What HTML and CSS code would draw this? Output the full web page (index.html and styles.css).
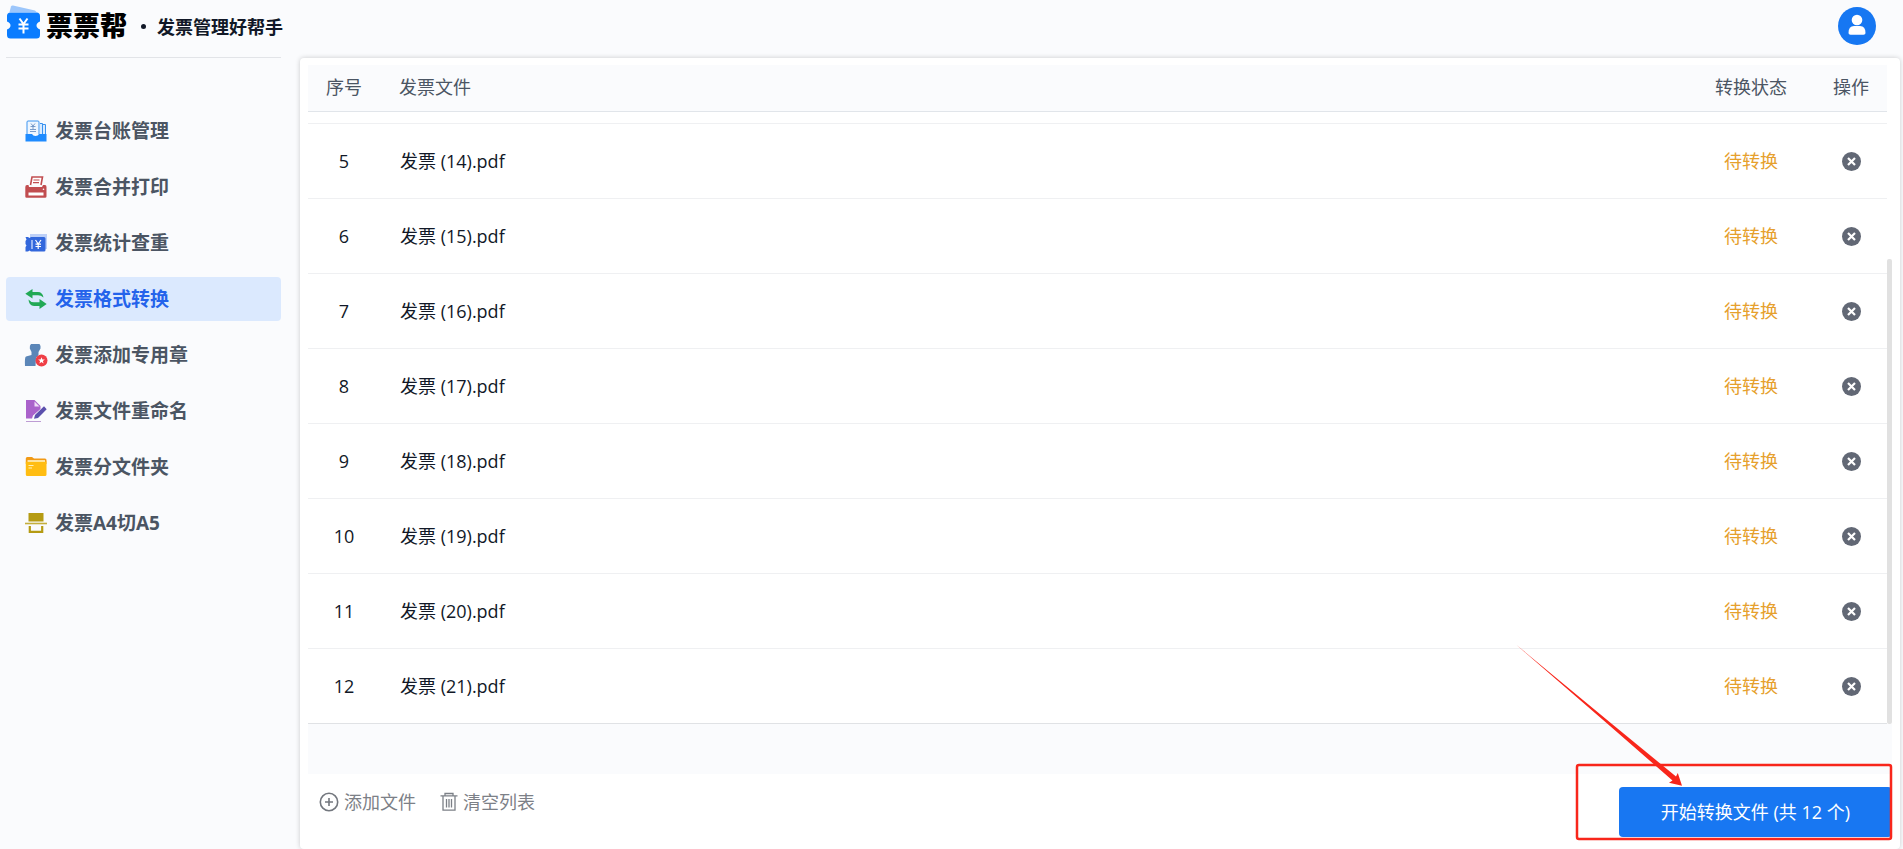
FILE: index.html
```html
<!DOCTYPE html>
<html lang="zh-CN">
<head>
<meta charset="utf-8">
<title>票票帮 · 发票管理好帮手</title>
<link rel="stylesheet" href="styles.css">
</head>
<body>
<div class="app">
  <header class="topbar">
    <div class="brand">
      <svg class="brand-mark" viewBox="0 0 34 34" aria-hidden="true">
        <path d="M2.500 6 4 .5Q4.500-.6 6-.4L28 4.500 29.500 6Z" fill="#9cc6fb"/>
        <path d="M3.500 6.500H29.500Q33 6.500 33 10V15.500Q29.500 17 29.500 19.500T33 23.500V29Q33 32.500 29.500 32.500H3.500Q0 32.500 0 29V23.500Q3.500 22 3.500 19.500T0 15.500V10Q0 6.500 3.500 6.500Z" fill="#0a7cff"/>
        <path d="M12.500 12.500 16.500 18 20.500 12.500M11.500 18.500H21.500M11.500 22.500H21.500M16.500 18V27.500" fill="none" stroke="#fff" stroke-width="2"/>
      </svg>
      <span class="brand-name">票票帮</span>
      <span class="brand-dot"></span>
      <span class="brand-slogan">发票管理好帮手</span>
    </div>
    <button class="avatar" type="button" aria-label="用户">
      <svg viewBox="0 0 38 38" aria-hidden="true"><circle cx="19" cy="13" r="5.300" fill="#fff"/><path d="M10.500 26Q10.500 19 16 19H22Q27.500 19 27.500 26 27.500 27.700 25.500 27.700H12.500Q10.500 27.700 10.500 26Z" fill="#fff"/></svg>
    </button>
  </header>
  <div class="body">
    <nav class="sidebar">
      <a class="nav-item" href="#">
        <svg class="nav-icon" viewBox="0 0 22 22" aria-hidden="true"><path d="M2 14V2Q2 1 3 1H13Q14 1 14 2V14" fill="#eef6ff" stroke="#3a93f0"/><path d="M15 3.500H17.500V15H15M18 4.500H20.500V15H18" fill="#d9ebff" stroke="#3a93f0"/><path d="M6 3.500 8 6 10 3.500M5.500 6.500H10.500M8 6V9M5 9.500H11M5 11.500H11" fill="none" stroke="#5d86bd" stroke-width=".8"/><path d="M.5 14H7Q8 16 10.500 16T14 14H21.500V21.500H.5Z" fill="#1e8bff"/></svg>
        <span>发票台账管理</span></a>
      <a class="nav-item" href="#">
        <svg class="nav-icon" viewBox="0 0 22 22" aria-hidden="true"><path d="M5.500 9 7 1H17.500L16 9" fill="#fff" stroke="#c14d50" stroke-width="1.600"/><path d="M8.500 4H14.500M8 6.700H14" stroke="#c14d50" stroke-width="1.200"/><path d="M2 9H3.500L4 11H17L18 9H20Q21.500 9 21.500 11V20.500Q21.500 21.800 20 21.800H1.500Q.3 21.800.3 20.500V11Q.3 9 2 9Z" fill="#c14d50"/><path d="M3.500 16.500H18.500V19.500H3.500Z" fill="#fff"/><circle cx="18.500" cy="13.200" r=".8" fill="#fff"/></svg>
        <span>发票合并打印</span></a>
      <a class="nav-item" href="#">
        <svg class="nav-icon" viewBox="0 0 22 22" aria-hidden="true"><path d="M5 2H22V17H5Z" fill="#bdd0f8"/><path d="M.5 5H3L4.500 6 6 5H19Q20.500 5 20.500 6.500V18Q20.500 19.500 19 19.500H6L4.500 18.500 3 19.500H.5V15L1.500 13.500.5 12V9L1.500 7.500Z" fill="#3267dc"/><path d="M7 8V17" stroke="#dbe6ff" stroke-width="1.200"/><path d="M10.500 8 13.200 12 16 8M10.500 12.200H16M10.500 14.500H16M13.200 12V17" fill="none" stroke="#fff" stroke-width="1.200"/></svg>
        <span>发票统计查重</span></a>
      <a class="nav-item is-active" href="#" aria-current="page">
        <svg class="nav-icon" viewBox="0 0 22 22" aria-hidden="true"><path d="M.3 5.800 7.500 1V4H13Q17.500 4 18.500 9.500 16 7.300 13 7.300H7.500V10.500Z" fill="#22a955"/><path d="M21.700 16 14.500 11V14.200H9Q5.500 14.200 3.500 11.500 4 18 9 18H14.500V21Z" fill="#22a955"/></svg>
        <span>发票格式转换</span></a>
      <a class="nav-item" href="#">
        <svg class="nav-icon" viewBox="0 0 22 22" aria-hidden="true"><path d="M6 0H14.500Q16 1.500 15.500 4.500L13.500 8V11L11 14 10.500 22H0Q-.5 13 1 12.500L6.500 11V8L4.800 4.500Q4.500 1 6 0Z" fill="#5b86b8"/><circle cx="16.500" cy="16.500" r="6" fill="#ef3e46"/><path d="M16.500 13.200 17.400 15.500 19.900 15.600 17.900 17.100 18.600 19.500 16.500 18.100 14.400 19.500 15.100 17.100 13.100 15.600 15.600 15.500Z" fill="#fff"/></svg>
        <span>发票添加专用章</span></a>
      <a class="nav-item" href="#">
        <svg class="nav-icon" viewBox="0 0 22 22" aria-hidden="true"><path d="M1 0H9.500L15.500 6V9L8 15.500 7 18.500H1Z" fill="#aa62cb"/><path d="M9.500 1.500V6.500H14.500Z" fill="#efdcf7"/><path d="M19 6.200 21.700 9.200 13 18 9 18.800 10 15Z" fill="#5b50ad"/><path d="M1 21.500H16" stroke="#bd9cd4"/></svg>
        <span>发票文件重命名</span></a>
      <a class="nav-item" href="#">
        <svg class="nav-icon" viewBox="0 0 22 22" aria-hidden="true"><path d="M.8 2.500Q.8 1 2.300 1H7L9 2.500H20Q21.500 2.500 21.500 4V8H.8Z" fill="#f19a16"/><path d="M2.500 4.200H20V8H2.500Z" fill="#fff3c5"/><path d="M.8 5.800H20Q21.500 5.800 21.500 5V18.500Q21.500 20 20 20H2.300Q.8 20 .8 18.500Z" fill="#ffbd12"/><path d="M3.500 9.500H8.500M3.500 12H7" stroke="#fff0b8"/></svg>
        <span>发票分文件夹</span></a>
      <a class="nav-item" href="#">
        <svg class="nav-icon" viewBox="0 0 22 22" aria-hidden="true"><path d="M3.500 1H18.500V9.500H3.500Z" fill="#b59b13"/><path d="M0 11.500H22" stroke="#c4ae3d" stroke-width="1.600"/><path d="M4.800 14V19.800H17.200V14" fill="none" stroke="#b59b13" stroke-width="2.200"/></svg>
        <span>发票A4切A5</span></a>
    </nav>
    <main class="panel">
      <div class="list">
        <table class="files">
          <thead>
            <tr><th class="col-seq" scope="col">序号</th><th class="col-file" scope="col">发票文件</th><th class="col-state" scope="col">转换状态</th><th class="col-op" scope="col">操作</th></tr>
          </thead>
          <tbody>
            <tr class="row-tail"><td colspan="4"></td></tr>
            <tr><td class="col-seq">5</td><td class="col-file">发票 (14).pdf</td><td class="col-state">待转换</td><td class="col-op"><button class="remove" type="button" aria-label="移除"><svg viewBox="0 0 19 19" aria-hidden="true"><use href="#cross"/></svg></button></td></tr>
            <tr><td class="col-seq">6</td><td class="col-file">发票 (15).pdf</td><td class="col-state">待转换</td><td class="col-op"><button class="remove" type="button" aria-label="移除"><svg viewBox="0 0 19 19" aria-hidden="true"><use href="#cross"/></svg></button></td></tr>
            <tr><td class="col-seq">7</td><td class="col-file">发票 (16).pdf</td><td class="col-state">待转换</td><td class="col-op"><button class="remove" type="button" aria-label="移除"><svg viewBox="0 0 19 19" aria-hidden="true"><use href="#cross"/></svg></button></td></tr>
            <tr><td class="col-seq">8</td><td class="col-file">发票 (17).pdf</td><td class="col-state">待转换</td><td class="col-op"><button class="remove" type="button" aria-label="移除"><svg viewBox="0 0 19 19" aria-hidden="true"><use href="#cross"/></svg></button></td></tr>
            <tr><td class="col-seq">9</td><td class="col-file">发票 (18).pdf</td><td class="col-state">待转换</td><td class="col-op"><button class="remove" type="button" aria-label="移除"><svg viewBox="0 0 19 19" aria-hidden="true"><use href="#cross"/></svg></button></td></tr>
            <tr><td class="col-seq">10</td><td class="col-file">发票 (19).pdf</td><td class="col-state">待转换</td><td class="col-op"><button class="remove" type="button" aria-label="移除"><svg viewBox="0 0 19 19" aria-hidden="true"><use href="#cross"/></svg></button></td></tr>
            <tr><td class="col-seq">11</td><td class="col-file">发票 (20).pdf</td><td class="col-state">待转换</td><td class="col-op"><button class="remove" type="button" aria-label="移除"><svg viewBox="0 0 19 19" aria-hidden="true"><use href="#cross"/></svg></button></td></tr>
            <tr><td class="col-seq">12</td><td class="col-file">发票 (21).pdf</td><td class="col-state">待转换</td><td class="col-op"><button class="remove" type="button" aria-label="移除"><svg viewBox="0 0 19 19" aria-hidden="true"><use href="#cross"/></svg></button></td></tr>
          </tbody>
        </table>
        <div class="scroll-track"><div class="scroll-thumb"></div></div>
      </div>
      <div class="list-foot"></div>
      <footer class="actions">
        <div class="tools">
          <button class="tool" type="button">
            <svg class="icon-add" viewBox="0 0 20 20" aria-hidden="true"><circle cx="10" cy="10" r="8.700" fill="none" stroke="#73777e" stroke-width="1.600"/><path d="M10 6V14M6 10H14" stroke="#73777e" stroke-width="1.600"/></svg>
            <span>添加文件</span></button>
          <button class="tool" type="button">
            <svg class="icon-bin" viewBox="0 0 18 20" aria-hidden="true"><path d="M.5 3.800H17.500M5 3.500V1.500H13V3.500M3 4V18.200H15V4M6.500 7V15.500M9 7V15.500M11.500 7V15.500" fill="none" stroke="#7c8087" stroke-width="1.300"/></svg>
            <span>清空列表</span></button>
        </div>
        <button class="primary" type="button">开始转换文件 (共 12 个)</button>
        <svg class="callout" viewBox="0 0 384 208" aria-hidden="true">
          <rect x="65" y="125" width="314" height="74" rx="2" fill="none" stroke="#f8261b" stroke-width="2.500"/>
          <path d="M4.500 5 100 84 164 136.500 165.800 133 170 145.800 157 142.800 160.500 140.500 98 86Z" fill="#f8261b"/>
        </svg>
      </footer>
    </main>
  </div>
</div>
<svg class="defs" aria-hidden="true"><defs><g id="cross"><circle cx="9.500" cy="9.500" r="9.500" fill="#626875"/><path d="M6 6 13 13M13 6 6 13" stroke="#fff" stroke-width="2.200"/></g></defs></svg>
</body>
</html>
```
FILE: styles.css
```css
* { box-sizing: border-box; }

body {
  margin: 0;
  background: #fafbfd;
  color: #111827;
  font: 18px/24px "Open Sans", "Noto Sans CJK SC", sans-serif;
}

button {
  border: 0;
  padding: 0;
  background: none;
  color: inherit;
  font: inherit;
  cursor: pointer;
}

svg { display: block; }
.defs { position: absolute; width: 0; height: 0; }

.app {
  display: flex;
  flex-direction: column;
  min-height: 100vh;
}

.topbar {
  display: flex;
  justify-content: space-between;
  align-items: center;
  height: 57px;
  padding: 0 27px 5px 7px;
}

.brand { display: flex; align-items: center; }
.brand-mark { width: 34px; height: 34px; margin-bottom: 6px; overflow: visible; }
.brand-name {
  margin-left: 5px;
  color: #000;
  font-size: 27px;
  font-weight: 900;
  line-height: 32px;
}
.brand-dot {
  width: 5px;
  height: 5px;
  margin: 0 11px 0 14px;
  border-radius: 50%;
  background: #111827;
}
.brand-slogan { padding-top: 2px; font-weight: 700; }

.avatar {
  width: 38px;
  height: 38px;
  border-radius: 50%;
  background: #1677f2;
}

.body { display: flex; flex: 1; padding-right: 3px; }

.sidebar {
  display: flex;
  flex-direction: column;
  gap: 12px;
  width: 275px;
  margin: 0 19px 0 6px;
  padding-top: 51px;
  border-top: 1px solid #e2e4e8;
}
.nav-item {
  display: flex;
  align-items: center;
  gap: 8px;
  height: 44px;
  padding-left: 19px;
  border-radius: 4px;
  color: #4b5563;
  font-size: 19px;
  font-weight: 700;
  text-decoration: none;
}
.nav-icon { width: 22px; height: 22px; overflow: visible; }
.nav-item.is-active { background: #dbe9fe; color: #2463eb; }

.panel {
  flex: 1;
  display: flex;
  flex-direction: column;
  margin-top: 1px;
  padding: 7px 8px 0;
  border-radius: 4px;
  background: #fff;
  box-shadow: 0 0 5px rgba(0, 0, 0, 0.2);
}

.list { display: flex; }
.files {
  flex: 1;
  border-collapse: separate;
  border-spacing: 0;
}
.files th {
  height: 47px;
  padding: 0 0 2px;
  border-bottom: 1px solid #e1e5ea;
  background: #fafbfd;
  color: #4b5563;
  font-weight: 400;
  text-align: center;
}
.files td {
  height: 75px;
  padding: 0;
  border-bottom: 1px solid #eff0f2;
  text-align: center;
}
.files .row-tail td { height: 12px; }
.files tr:last-child td { border-bottom-color: #e0e2e5; }
.files .row-tail:first-child td { border-bottom-color: #eff0f2; }
.files .col-seq { width: 72px; }
.files .col-file { padding-left: 19px; text-align: left; }
.files td.col-file { padding-left: 20px; }
.files .col-state { width: 128px; }
.files td.col-state { color: #e6a02c; }
.files .col-op { width: 72px; }

.remove {
  display: block;
  width: 19px;
  height: 19px;
  margin: 0 auto;
}

.scroll-track { display: flex; width: 5px; padding-top: 194px; }
.scroll-thumb { flex: 1; border-radius: 2px; background: #e1e1e1; }

.list-foot { height: 50px; background: #fafbfd; }

.actions {
  position: relative;
  display: flex;
  justify-content: space-between;
  align-items: flex-start;
  padding: 13px 0 12px 11px;
}
.tools { display: flex; gap: 24px; padding-top: 3px; color: #7c8087; }
.tool { display: flex; align-items: center; gap: 5px; }
.icon-add { width: 20px; height: 20px; }
.icon-bin { width: 18px; height: 20px; }

.primary {
  height: 50px;
  padding: 0 42px;
  border-radius: 4px;
  background: #1877f2;
  color: #fff;
}

/* Red frame and arrow laid over the convert button */
.callout {
  position: absolute;
  right: -4px;
  bottom: 1px;
  width: 384px;
  height: 208px;
  pointer-events: none;
}
```
